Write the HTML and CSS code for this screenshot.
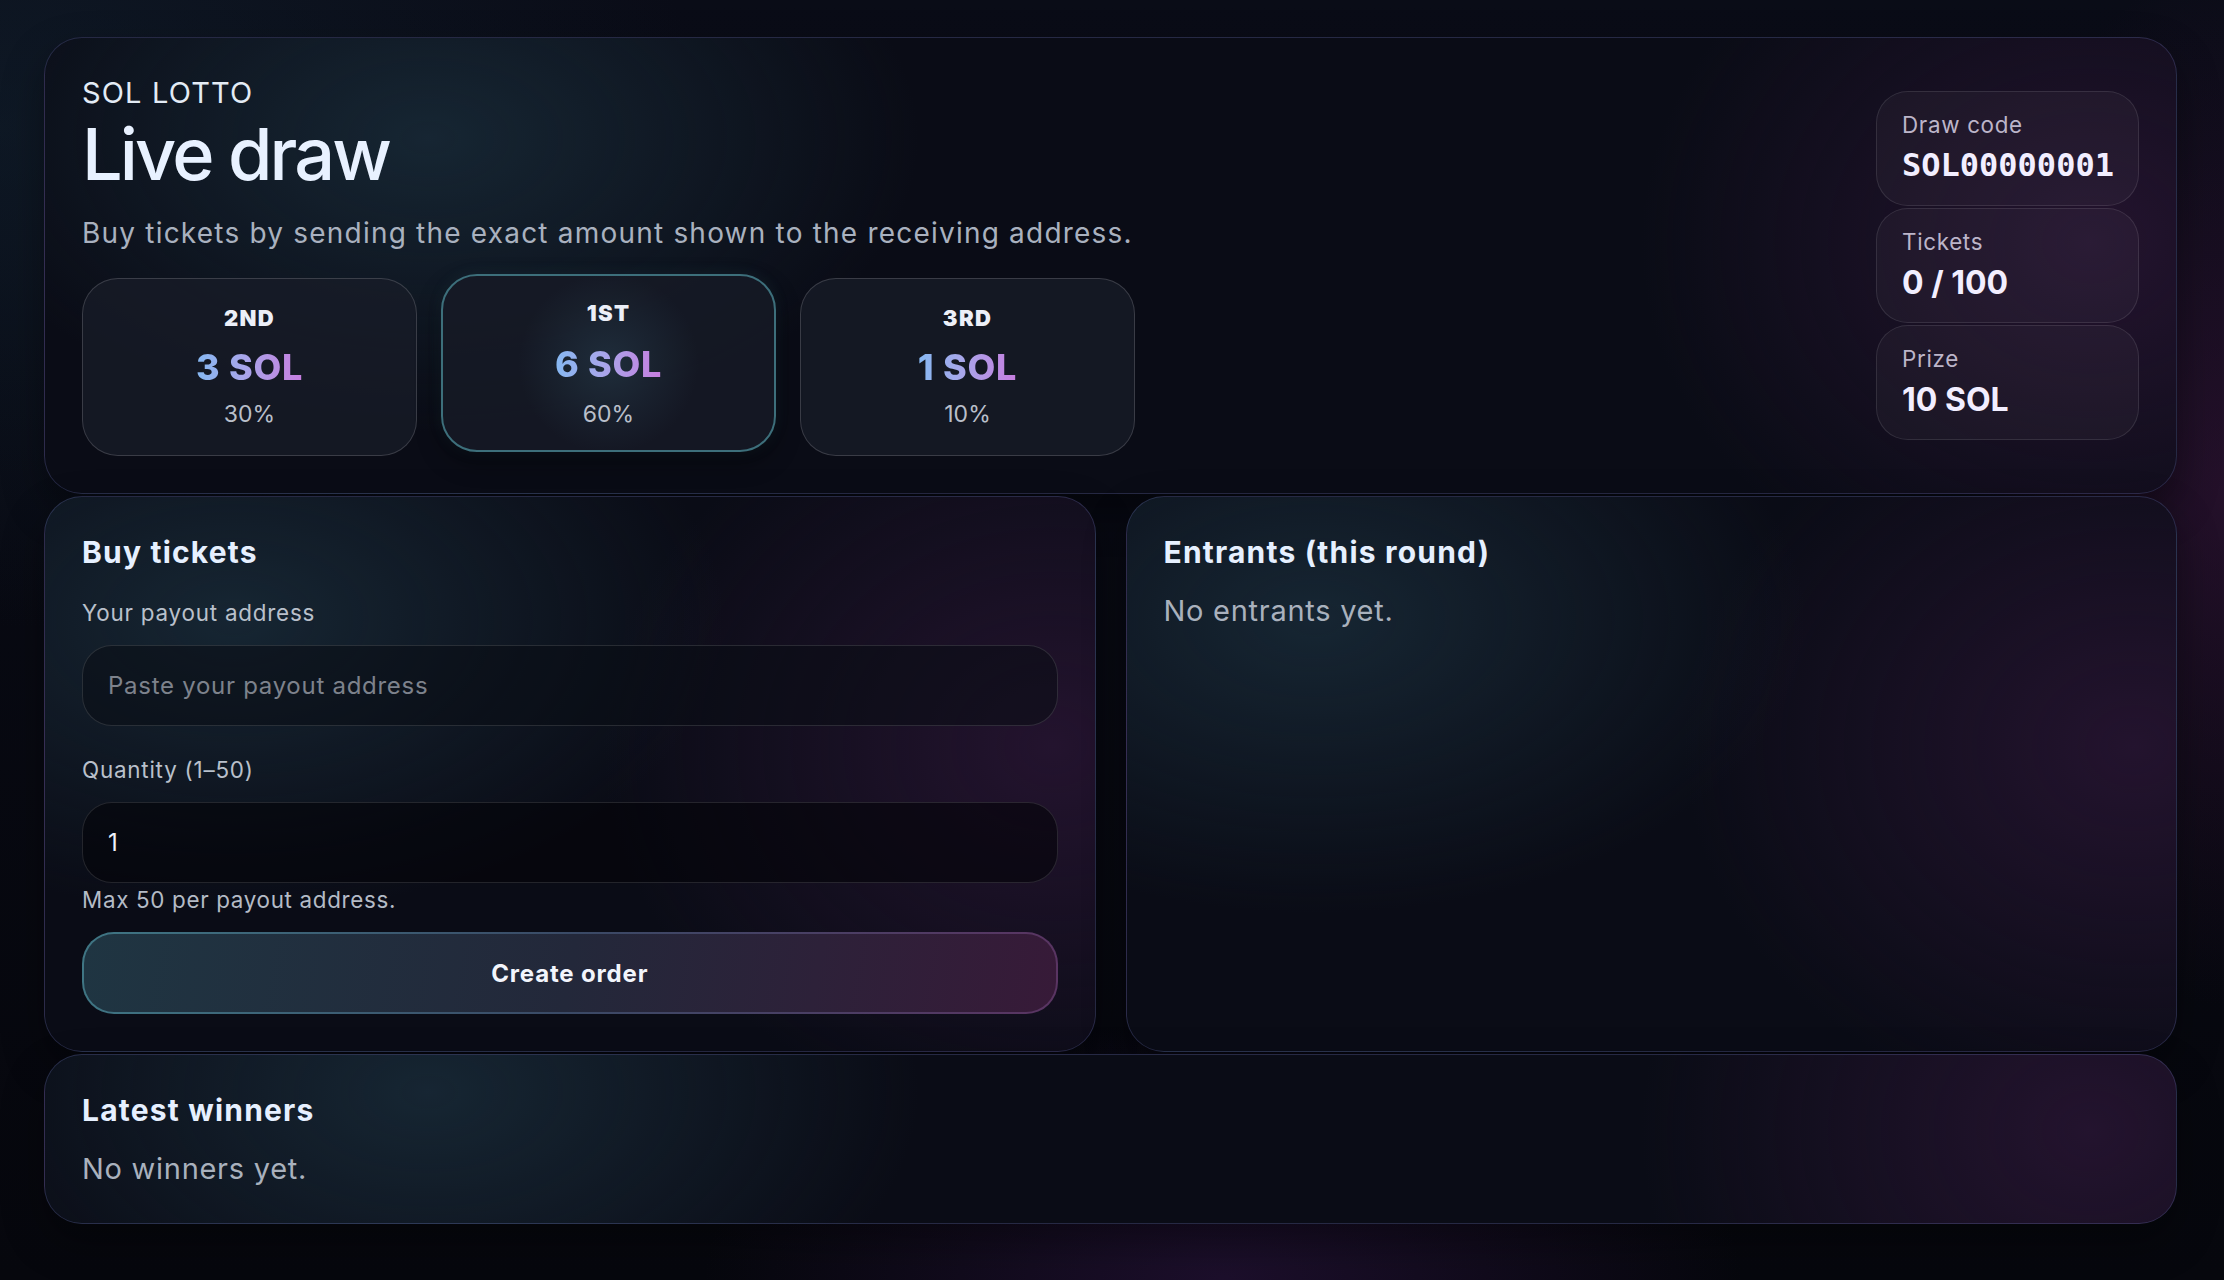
FILE: index.html
```html
<!DOCTYPE html>
<html lang="en">
<head>
<meta charset="utf-8">
<title>SOL Lotto – Live draw</title>
<link rel="stylesheet" href="styles.css">
</head>
<body>
<main class="page">
  <section class="card hero">
    <div class="hero-main">
      <div class="kicker">SOL LOTTO</div>
      <h1 class="title">Live draw</h1>
      <p class="subtitle">Buy tickets by sending the exact amount shown to the receiving address.</p>
      <div class="prizes">
        <div class="prize">
          <div class="prize-rank">2ND</div>
          <div class="prize-amount">3 SOL</div>
          <div class="prize-pct">30%</div>
        </div>
        <div class="prize prize-first">
          <div class="prize-rank">1ST</div>
          <div class="prize-amount">6 SOL</div>
          <div class="prize-pct">60%</div>
        </div>
        <div class="prize">
          <div class="prize-rank">3RD</div>
          <div class="prize-amount">1 SOL</div>
          <div class="prize-pct">10%</div>
        </div>
      </div>
    </div>
    <div class="stats">
      <div class="stat">
        <div class="stat-label">Draw code</div>
        <div class="stat-value mono">SOL00000001</div>
      </div>
      <div class="stat">
        <div class="stat-label">Tickets</div>
        <div class="stat-value">0 / 100</div>
      </div>
      <div class="stat">
        <div class="stat-label">Prize</div>
        <div class="stat-value">10 SOL</div>
      </div>
    </div>
  </section>

  <div class="row">
    <section class="card panel">
      <h2 class="panel-title">Buy tickets</h2>
      <div class="field field-first">
        <label class="field-label" for="addr">Your payout address</label>
        <input class="input" id="addr" type="text" placeholder="Paste your payout address">
      </div>
      <div class="field">
        <label class="field-label" for="qty">Quantity (1–50)</label>
        <input class="input input-dark" id="qty" type="text" value="1">
        <div class="hint">Max 50 per payout address.</div>
      </div>
      <button class="btn" type="button">Create order</button>
    </section>

    <section class="card panel">
      <h2 class="panel-title">Entrants (this round)</h2>
      <p class="empty">No entrants yet.</p>
    </section>
  </div>

  <section class="card panel">
    <h2 class="panel-title">Latest winners</h2>
    <p class="empty">No winners yet.</p>
  </section>
</main>
</body>
</html>
```

FILE: styles.css
```css
* { box-sizing: border-box; }

html, body {
  margin: 0;
  min-height: 100%;
}

body {
  min-height: 1280px;
  font-family: Inter, "Noto Sans", "Liberation Sans", sans-serif;
  color: #e6eefc;
  background:
    radial-gradient(ellipse 520px 260px at 55% 100%, rgba(70, 30, 100, 0.35), transparent 100%),
    radial-gradient(ellipse 260px 520px at 100% 38%, rgba(70, 24, 70, 0.45), transparent 100%),
    radial-gradient(ellipse 700px 500px at 0% 10%, rgba(20, 40, 55, 0.45), transparent 100%),
    linear-gradient(180deg, #0a0c17 0%, #06070d 100%);
}

.page {
  display: flex;
  flex-direction: column;
  gap: 2px;
  padding: 37px 47px 40px 44px;
}

.card {
  border: 1px solid rgba(110, 118, 190, 0.28);
  border-radius: 38px;
  background:
    radial-gradient(ellipse 700px 420px at 18% 22%, rgba(26, 46, 60, 0.75), transparent 70%),
    radial-gradient(ellipse 600px 500px at 96% 45%, rgba(46, 22, 56, 0.7), transparent 75%),
    #0a0c16;
  box-shadow: 0 18px 40px rgba(0, 0, 0, 0.35);
}

/* Hero */
.hero {
  display: flex;
  justify-content: space-between;
  align-items: center;
  padding: 37px;
}

.hero-main {
  display: flex;
  flex-direction: column;
}

.kicker {
  font-size: 29px;
  font-weight: 400;
  letter-spacing: 0.04em;
  color: #e3ebf5;
  line-height: 35px;
}

.title {
  margin: 4px 0 0;
  font-size: 72px;
  font-weight: 500;
  line-height: 79px;
  letter-spacing: -0.04em;
  color: #e8f1ff;
}

.subtitle {
  margin: 23px 0 0;
  font-size: 28px;
  line-height: 34px;
  letter-spacing: 0.043em;
  color: #a9b1bf;
}

.prizes {
  display: grid;
  grid-template-columns: repeat(3, 335px);
  gap: 24px;
  margin-top: 28px;
}

.prize {
  display: flex;
  flex-direction: column;
  align-items: center;
  gap: 11px;
  padding: 26px 0 27px;
  border: 1px solid rgba(255, 255, 255, 0.16);
  border-radius: 36px;
  background: rgba(24, 28, 40, 0.75);
}

.prize-first {
  transform: translateY(-4px);
  gap: 14px;
  padding: 24px 0 22px;
  border: 2px solid #3d6f7b;
  background:
    radial-gradient(circle 90px at 50% 50%, rgba(40, 62, 78, 0.55), transparent 100%),
    rgba(22, 26, 38, 0.85);
  box-shadow: 0 10px 24px rgba(0, 0, 0, 0.4), 0 0 14px rgba(60, 130, 150, 0.15);
}

.prize-rank {
  margin-bottom: 2px;
  font-size: 22px;
  font-weight: 900;
  letter-spacing: 0.06em;
  line-height: 27px;
  color: #eceff8;
}

.prize-first .prize-rank {
  margin-bottom: 1px;
}

.prize-amount {
  font-size: 36px;
  font-weight: 800;
  line-height: 44px;
  letter-spacing: 0.02em;
  background: linear-gradient(90deg, #86b8f2 0%, #a8a6ea 45%, #c77ddf 100%);
  -webkit-background-clip: text;
  background-clip: text;
  color: transparent;
}

.prize-pct {
  font-size: 23px;
  line-height: 28px;
  color: #b9bfca;
}

.stats {
  display: flex;
  flex-direction: column;
  gap: 2px;
  width: 263px;
}

.stat {
  padding: 19px 25px 20px;
  border: 1px solid rgba(255, 255, 255, 0.1);
  border-radius: 32px;
  background: rgba(255, 255, 255, 0.035);
}

.stat-label {
  font-size: 22.4px;
  line-height: 27px;
  letter-spacing: 0.03em;
  color: #bcb5c9;
}

.stat-value {
  margin-top: 8px;
  font-size: 32px;
  font-weight: 700;
  line-height: 39px;
  color: #f2eeff;
}

.stat-value.mono {
  font-family: "DejaVu Sans Mono", "Liberation Mono", monospace;
  font-size: 32px;
}

/* Panels */
.row {
  display: grid;
  grid-template-columns: 1fr 1fr;
  column-gap: 30px;
}

.panel {
  padding: 37px;
}

.panel-title {
  margin: 0;
  font-size: 30px;
  font-weight: 750;
  line-height: 36px;
  letter-spacing: 0.04em;
  color: #e6f0ff;
}

.empty {
  margin: 23px 0 0;
  font-size: 29px;
  line-height: 35px;
  letter-spacing: 0.025em;
  color: #a9b1bd;
}

.field {
  display: flex;
  flex-direction: column;
  margin-top: 30px;
}

.field-first {
  margin-top: 29px;
}

.field-label {
  margin-bottom: 19px;
  font-size: 22.4px;
  line-height: 27px;
  letter-spacing: 0.035em;
  color: #b9c0cb;
}

.input {
  height: 81px;
  padding: 0 25px;
  border: 1px solid rgba(255, 255, 255, 0.12);
  border-radius: 30px;
  background: rgba(10, 12, 20, 0.55);
  font-family: inherit;
  font-size: 24px;
  letter-spacing: 0.03em;
  color: #eef2fa;
  outline: none;
}

.input::placeholder {
  color: #7d828c;
}

.input-dark {
  background: rgba(3, 4, 9, 0.6);
}

.hint {
  margin-top: 3px;
  font-size: 22.4px;
  line-height: 27px;
  letter-spacing: 0.03em;
  color: #b4bbc6;
}

.btn {
  margin-top: 19px;
  width: 100%;
  height: 82px;
  border: 2px solid transparent;
  border-radius: 32px;
  background:
    linear-gradient(100deg, #1f3542 0%, #23283a 50%, #371a38 100%) padding-box,
    linear-gradient(100deg, #3f7684 0%, #3a4a66 50%, #5a3462 100%) border-box;
  font-family: inherit;
  font-size: 24px;
  font-weight: 700;
  letter-spacing: 0.035em;
  color: #f2f5fc;
  cursor: pointer;
}
```
